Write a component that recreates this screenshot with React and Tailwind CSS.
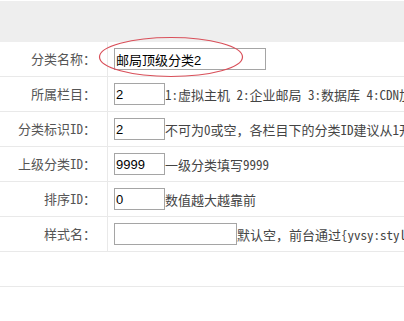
import React from 'react';

const labelFont = { fontFamily: '"Noto Sans Mono CJK SC", "Noto Sans CJK SC", monospace' };

const rows = [
  { label: '分类名称：', value: '邮局顶级分类2', width: 'w-[152px]', hint: '' },
  { label: '所属栏目：', value: '2', width: 'w-[51px]', hint: '1:虚拟主机 2:企业邮局 3:数据库 4:CDN加速' },
  { label: '分类标识ID：', value: '2', width: 'w-[51px]', hint: '不可为0或空，各栏目下的分类ID建议从1开始' },
  { label: '上级分类ID：', value: '9999', width: 'w-[51px]', hint: '一级分类填写9999' },
  { label: '排序ID：', value: '0', width: 'w-[51px]', hint: '数值越大越靠前' },
  { label: '样式名：', value: '', width: 'w-[123px]', hint: '默认空，前台通过{yvsy:style}调用' },
];

const Row = ({ label, value, width, hint }) => (
  <div className="flex h-[35px] border-b border-[#e9e9e9]">
    <div
      className="w-[108px] shrink-0 border-r border-[#e9e9e9] flex items-center justify-end pr-[11px] text-[13px] text-[#555]"
      style={labelFont}
    >
      {label}
    </div>
    <div className="flex items-center pl-[6px] whitespace-nowrap overflow-hidden">
      <input
        readOnly
        value={value}
        className={`${width} h-[22px] shrink-0 border border-[#a5a5a5] bg-white px-[1px] text-[13px] text-black font-['Liberation_Sans','Noto_Sans_CJK_SC',sans-serif] outline-none`}
      />
      {hint && (
        <span className="text-[13px] text-[#444] leading-none" style={labelFont}>
          {hint}
        </span>
      )}
    </div>
  </div>
);

export default function App() {
  return (
    <div className="relative w-[404px] h-[321px] bg-white overflow-hidden pt-[1px]">
      <div className="h-[41px] bg-[#eeeeee]" />
      {rows.map((r) => (
        <Row key={r.label} {...r} />
      ))}
      <div className="h-[35px] border-b border-[#e9e9e9]" />

      {/* red circle marking the name field */}
      <svg className="absolute left-[98px] top-[36px]" width="146" height="42" viewBox="0 0 146 42">
        <ellipse cx="73" cy="21" rx="71.5" ry="19.5" fill="none" stroke="#d9505a" strokeWidth="1.2" />
      </svg>
    </div>
  );
}
